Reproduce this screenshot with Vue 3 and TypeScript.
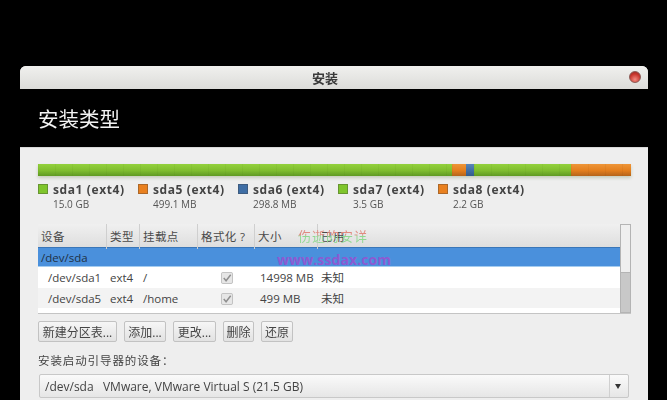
<script setup lang="ts">
const segments = [
  { color: 'green', width: 414 },
  { color: 'orange', width: 14 },
  { color: 'blue', width: 8 },
  { color: 'green', width: 97 },
  { color: 'orange', width: 60 },
]

const legend = [
  { name: 'sda1 (ext4)', size: '15.0 GB', color: 'green' },
  { name: 'sda5 (ext4)', size: '499.1 MB', color: 'orange' },
  { name: 'sda6 (ext4)', size: '298.8 MB', color: 'blue' },
  { name: 'sda7 (ext4)', size: '3.5 GB', color: 'green' },
  { name: 'sda8 (ext4)', size: '2.2 GB', color: 'orange' },
]

const columns = ['设备', '类型', '挂载点', '格式化 ?', '大小', '已用']

const rows = [
  { dev: '/dev/sda1', type: 'ext4', mount: '/', size: '14998 MB', used: '未知' },
  { dev: '/dev/sda5', type: 'ext4', mount: '/home', size: '499 MB', used: '未知' },
  { dev: '/dev/sda6', type: 'ext4', mount: '/boot', size: '298 MB', used: '未知' },
]

const buttons = [
  { label: '新建分区表...', width: 79 },
  { label: '添加...', width: 42 },
  { label: '更改...', width: 43 },
  { label: '删除', width: 31 },
  { label: '还原', width: 32 },
]
</script>

<template>
  <div class="screen">
    <div class="window">
      <div class="titlebar">
        <span class="title">安装</span>
        <span class="close"></span>
      </div>
      <div class="banner">安装类型</div>
      <div class="body">
        <div class="bar">
          <div
            v-for="(s, i) in segments"
            :key="i"
            :class="['seg', s.color]"
            :style="{ width: s.width + 'px' }"
          ></div>
        </div>
        <div class="legend">
          <div v-for="item in legend" :key="item.name" class="legend-item">
            <span :class="['swatch', item.color]"></span>
            <div>
              <div class="legend-name">{{ item.name }}</div>
              <div class="legend-size">{{ item.size }}</div>
            </div>
          </div>
        </div>

        <div class="table-wrap">
          <div class="table">
            <div class="head">
              <div v-for="c in columns" :key="c" class="th">{{ c }}</div>
            </div>
            <div class="disk">/dev/sda</div>
            <div v-for="(r, i) in rows" :key="r.dev" :class="['row', { odd: i % 2 === 1 }]">
              <div class="td dev">{{ r.dev }}</div>
              <div class="td">{{ r.type }}</div>
              <div class="td">{{ r.mount }}</div>
              <div class="td check-cell">
                <svg width="12" height="12" viewBox="0 0 13 13">
                  <rect x="0.5" y="0.5" width="12" height="12" rx="1.5" fill="#e6e6e6" stroke="#bdbdbd" />
                  <path d="M3 6.5 L5.5 9.5 L10.5 3" fill="none" stroke="#8f8f8f" stroke-width="1.6" />
                </svg>
              </div>
              <div class="td size">{{ r.size }}</div>
              <div class="td">{{ r.used }}</div>
            </div>
            <div class="wm wm-cn">伤逝的安详</div>
            <div class="wm wm-url">www.ssdax.com</div>
          </div>
          <div class="scrollbar"><div class="thumb"></div></div>
        </div>

        <div class="buttons">
          <button
            v-for="b in buttons"
            :key="b.label"
            class="btn"
            :style="{ width: b.width + 'px' }"
          >{{ b.label }}</button>
        </div>

        <div class="boot-label">安装启动引导器的设备：</div>
        <div class="combo">
          <span class="combo-text">/dev/sda&nbsp;&nbsp;&nbsp;VMware, VMware Virtual S (21.5 GB)</span>
          <span class="combo-arrow"></span>
        </div>
      </div>
    </div>
  </div>
</template>

<style>
html,
body {
  margin: 0;
  background: #000;
}
</style>

<style scoped>
.screen {
  width: 667px;
  height: 400px;
  overflow: hidden;
  background: #000;
  padding: 66px 19px 0 20px;
  box-sizing: border-box;
  font-family: "Open Sans", "Noto Sans", "Noto Sans CJK SC", sans-serif;
  font-size: 12px;
  color: #3c3c3c;
}
.window {
  width: 628px;
  height: 334px;
  border-radius: 6px 6px 0 0;
  overflow: hidden;
  background: #eeeeee;
  filter: blur(0.35px);
}
.titlebar {
  height: 23px;
  padding-right: 18px;
  background: linear-gradient(#f0f0ee, #dcdcd9);
  display: flex;
  align-items: center;
  justify-content: center;
  position: relative;
  font-size: 13px;
  font-weight: 700;
  color: #3a3a3a;
}
.close {
  position: absolute;
  right: 7px;
  top: 5px;
  width: 12px;
  height: 12px;
  border-radius: 50%;
  background: radial-gradient(circle at 50% 75%, #f08a80, #c8352c 60%, #8e2a24);
  border: 1px solid #8d5a55;
  box-sizing: border-box;
}
.banner {
  height: 58px;
  background: #000;
  color: #f2f2f2;
  font-size: 20.5px;
  padding-left: 18px;
  display: flex;
  align-items: center;
  border-bottom: 1px solid #d8d8d8;
}
.body {
  padding: 16px 17px 0 18px;
}
.bar {
  display: flex;
  height: 12px;
  box-shadow: 0 2px 3px rgba(110, 130, 70, 0.3);
}
.seg.green {
  background-image:
    linear-gradient(90deg, rgba(70, 110, 20, 0.07) 1px, transparent 1px),
    linear-gradient(#93d13c, #7fbd2e 55%, #5f9a22);
  background-size: 17px 100%, 100% 100%;
}
.seg.orange {
  background-image:
    linear-gradient(90deg, rgba(120, 60, 10, 0.07) 1px, transparent 1px),
    linear-gradient(#ee9538, #e37e1c 55%, #b5641a);
  background-size: 17px 100%, 100% 100%;
}
.seg.blue {
  background: linear-gradient(#5a86b8, #3f6ea5 55%, #335b8a);
}
.legend {
  display: flex;
  margin-top: 7px;
  height: 41px;
}
.legend-item {
  width: 100px;
  display: flex;
  gap: 5px;
}
.swatch {
  width: 10px;
  height: 10px;
  margin-top: 1px;
  box-sizing: border-box;
  border: 1px solid rgba(60, 60, 60, 0.35);
}
.swatch.green {
  background: #7fc52c;
}
.swatch.orange {
  background: #e9801f;
}
.swatch.blue {
  background: #3f6ea5;
}
.legend-name {
  font-size: 12px;
  font-weight: 700;
  letter-spacing: 0.6px;
  line-height: 14px;
  color: #444;
}
.legend-size {
  font-size: 10px;
  line-height: 13px;
  margin-top: 1px;
  color: #555;
}
.table-wrap {
  display: flex;
  height: 89px;
  width: 593px;
  box-shadow: 0 1px 0 #c4c4c4;
}
.table {
  flex: 1;
  position: relative;
  overflow: hidden;
  background: #fff;
}
.head,
.row {
  display: grid;
  grid-template-columns: 69px 33px 58px 57px 63px 1fr;
}
.head {
  height: 23px;
  background: linear-gradient(#f0f0f0, #dedede);
}
.th {
  padding-left: 3px;
  line-height: 25px;
  font-size: 11.5px;
  letter-spacing: 0.4px;
  border-right: 1px solid #cfcfcf;
  color: #4a4a4a;
}
.th:last-child {
  border-right: 0;
}
.disk {
  height: 20px;
  line-height: 20px;
  padding-left: 3px;
  box-sizing: border-box;
  background: #4a90dc;
  border-top: 1px solid #3a76b8;
  border-bottom: 1px solid #a4ccf0;
  font-size: 11.5px;
  color: #1f3045;
}
.row {
  height: 20.5px;
  line-height: 22px;
  background: #fff;
  font-size: 11.5px;
  color: #444;
}
.row.odd {
  background: #f3f3f3;
}
.td {
  padding-left: 3px;
}
.td.dev {
  padding-left: 10px;
}
.td.size {
  padding-left: 5px;
}
.check-cell {
  display: flex;
  align-items: center;
  padding-left: 23px;
}
.wm {
  position: absolute;
  white-space: nowrap;
}
.wm-cn {
  left: 260px;
  top: 2px;
  font-size: 13px;
  letter-spacing: 1px;
  background: linear-gradient(#e08a80 45%, #8fd890 55%);
  -webkit-background-clip: text;
  background-clip: text;
  color: transparent;
}
.wm-url {
  left: 239px;
  top: 26px;
  font-size: 14px;
  font-weight: 700;
  letter-spacing: 0.1px;
  color: #8c5ad2;
}
.scrollbar {
  width: 11px;
  background: #c8c8c8;
  border: 1px solid #b4b4b4;
  box-sizing: border-box;
}
.thumb {
  height: 47px;
  background: #efefef;
  border-bottom: 1px solid #b4b4b4;
}
.buttons {
  display: flex;
  gap: 7px;
  margin-top: 8px;
}
.btn {
  height: 21px;
  padding: 0;
  font-family: inherit;
  font-size: 12px;
  color: #444;
  background: linear-gradient(#f6f6f6, #e2e2e2);
  border: 1px solid #c2c2c2;
  border-radius: 2px;
}
.boot-label {
  margin-top: 11px;
  line-height: 15px;
  font-size: 11.5px;
  letter-spacing: 0.9px;
  color: #444;
}
.combo {
  margin-top: 6px;
  margin-left: 1px;
  height: 24px;
  width: 590px;
  display: flex;
  align-items: center;
  justify-content: space-between;
  box-sizing: border-box;
  background: linear-gradient(#fafafa, #e6e6e6);
  border: 1px solid #c8c8c8;
  border-radius: 2px;
}
.combo-text {
  padding-left: 5px;
  font-size: 12px;
  color: #444;
}
.combo-arrow {
  width: 18px;
  height: 22px;
  border-left: 1px solid #d0d0d0;
  position: relative;
}
.combo-arrow::after {
  content: "";
  position: absolute;
  left: 5px;
  top: 9px;
  border-left: 3.5px solid transparent;
  border-right: 3.5px solid transparent;
  border-top: 5px solid #333;
}
</style>
